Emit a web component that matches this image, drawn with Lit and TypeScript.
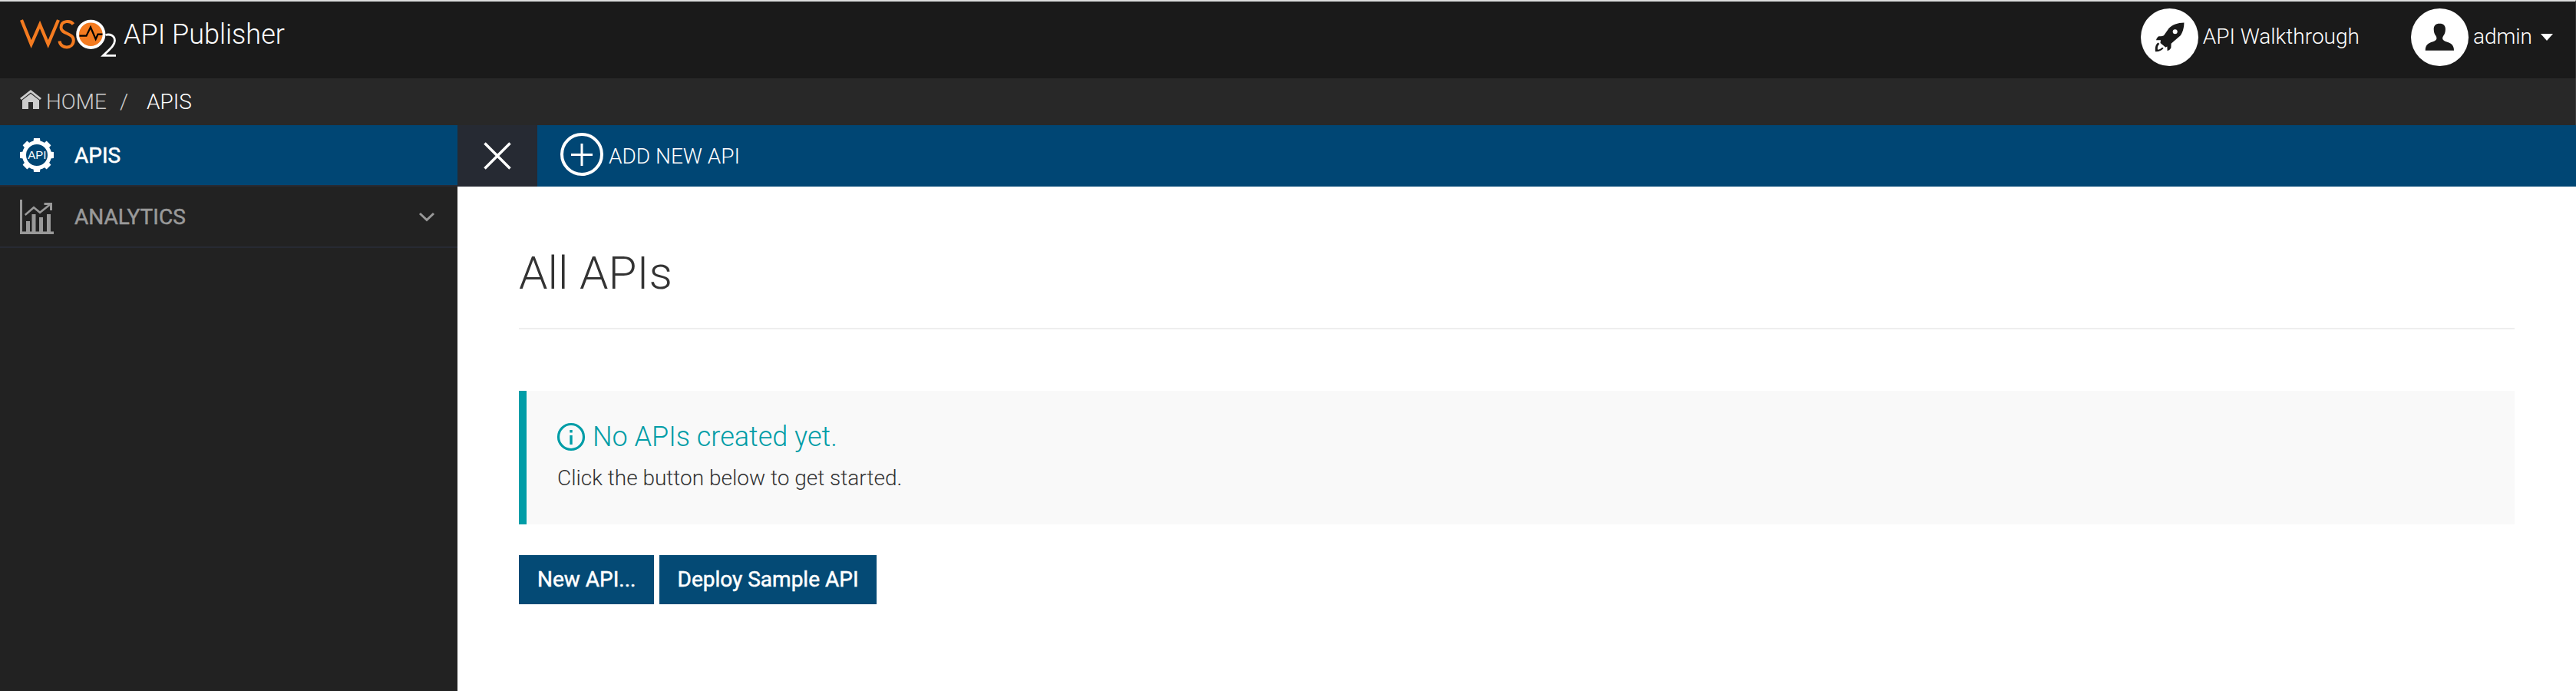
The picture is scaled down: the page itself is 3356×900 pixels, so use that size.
import { LitElement, html, css } from "lit";
import { customElement } from "lit/decorators.js";

@customElement("app-root")
export class AppRoot extends LitElement {
  static styles = css`
    :host { display: block; font-family: Roboto, "Liberation Sans", sans-serif; font-weight: 300; font-size: 28px; line-height: 40px; color: #333; background: #fff; }
    * { box-sizing: border-box; }
    svg { display: block; flex: none; overflow: visible; }
    .page { height: 900px; display: flex; flex-direction: column; overflow: hidden; }
    .topbar { flex: none; height: 102px; border-top: 2px solid #dcdddd; border-right: 1px solid #333; background: #1a1a1a; color: #fff; display: flex; justify-content: space-between; padding-right: 29px; }
    .brand { display: flex; padding-left: 26px; }
    .brand svg { margin-top: 23px; }
    .brand-name { font-size: 36px; line-height: 50px; margin: 18px 0 0 10px; white-space: nowrap; }
    .tools { display: flex; height: 75px; margin-top: 9px; align-items: center; }
    .tool { display: flex; align-items: center; gap: 6px; white-space: nowrap; }
    .tool + .tool { margin-left: 67px; }
    .tool svg + span { margin-top: -2px; }
    .caret { width: 0; height: 0; border: 8px solid transparent; border-top: 9px solid #fff; border-bottom: 0; margin-left: 5px; }
    .crumbs { flex: none; height: 61px; border-right: 1px solid #3c3c3c; background: #282828; color: #ccc; display: flex; align-items: center; padding-left: 26px; white-space: nowrap; }
    .crumbs svg { margin-bottom: 6px; }
    .crumbs .home { margin-left: 6px; }
    .crumbs .sep { margin-left: 17px; }
    .crumbs .here { margin-left: 24px; color: #fff; }
    .body { flex: 1; display: flex; min-height: 0; }
    .sidebar { flex: none; width: 596px; background: #222; }
    .item { height: 80px; border-bottom: 2px solid #272a33; display: flex; align-items: center; padding: 0 30px 0 26px; color: #999; font-weight: 400; -webkit-text-stroke: 0.5px currentColor; }
    .item.active { background: #004674; color: #fff; }
    .item .label { margin-left: 27px; padding-top: 1px; flex: 1; }
    .main { flex: 1; display: flex; flex-direction: column; }
    .actions { height: 80px; background: #004674; color: #fff; display: flex; }
    .close { width: 104px; background: #262a33; display: flex; justify-content: center; align-items: center; }
    .add { display: flex; align-items: center; margin-left: 30px; gap: 7px; }
    .add svg { margin-bottom: 4px; }
    .add span { padding-top: 1px; }
    .content { padding: 80px 80px 0; display: flex; flex-direction: column; }
    h1 { margin: 0; font-size: 60px; line-height: 66px; font-weight: 300; padding-bottom: 38px; border-bottom: 2px solid #eee; }
    .notice { margin-top: 80px; height: 174px; border-left: 10px solid #009da7; background: #f9f9f9; padding: 38px 40px 0; }
    .notice h2 { margin: 0; font-size: 36px; line-height: 44px; font-weight: 300; color: #009da7; display: flex; align-items: center; gap: 10px; }
    .notice p { margin: 12px 0 0; }
    .buttons { display: flex; gap: 7px; margin-top: 40px; }
    button { font: inherit; font-weight: 400; -webkit-text-stroke: 0.5px currentColor; color: #fff; background: #044a75; border: 0; height: 64px; padding: 0 23px 0 24px; }
    .gear-text { font-family: "Liberation Sans", sans-serif; font-size: 15px; font-weight: 400; }
  `;

  render() {
    return html`
      <div class="page">
        <header class="topbar">
          <div class="brand">
            <svg width="125" height="50" viewBox="0 0 125 50" fill="none">
              <path d="M2 1 14.700 32.500 26 7 36.700 32.500 50 1" stroke="#f47b20" stroke-width="4.200" />
              <path d="M69.500 6.500C66 1.500 53.500 1 53.500 11C53.500 19.500 69.800 17.500 69.800 27.500C69.800 39 53 39.500 51.500 28.500" stroke="#f47b20" stroke-width="4" />
              <circle cx="92.300" cy="19.800" r="17.200" fill="#f47b20" stroke="#fff" stroke-width="3.800" />
              <path d="M77.500 21.700H86.500L92 10.500 98.700 26 101.500 19.700H107.500" stroke="#000" stroke-width="2.200" />
              <path d="M111.500 20.500C117 19 123.500 21 123.500 28C123.500 34 117 39 108.500 47.300H125" stroke="#fff" stroke-width="2.800" />
            </svg>
            <span class="brand-name">API Publisher</span>
          </div>
          <div class="tools">
            <div class="tool">
              <svg width="75" height="75" viewBox="0 0 75 75"><circle cx="37.500" cy="37.500" r="37.500" fill="#fff" />
                <path fill="#1a1a1a" d="M56.400 18.500C48 18.500 41 21.500 36.700 25.800L30 35.200C27 36.500 25 36 23.400 36.200C21.500 37.500 20.500 39 20 41.200L26 41.200 25.500 45 32.400 50.800 34.400 49.500 34.600 55.200C37 54.500 38.500 53 39.400 51.200L39.600 45.800 51.700 35.200C55 31 56.500 24 56.400 18.500Z" />
                <path fill="#1a1a1a" d="M22.500 44.500C19 47 18.500 51.500 19 56.200C23.500 56.500 27 55 29.700 51.800L28 50.800C26 52.800 24 53.800 22 53.800C21.500 51 22 48.500 24.300 46Z" />
                <circle cx="44.700" cy="30.200" r="3" fill="#fff" /></svg>
              <span>API Walkthrough</span>
            </div>
            <div class="tool">
              <svg width="75" height="75" viewBox="0 0 75 75"><circle cx="37.500" cy="37.500" r="37.500" fill="#fff" />
                <path fill="#1a1a1a" d="M37.300 19.800C32 19.800 29.700 22.500 29.700 27C29.700 31 30.800 33.500 32.300 35.500C33.500 37.500 33.800 39 33 40.500C31.500 43 26.500 43.500 22.800 45.800C19.500 48 18.700 51 18.700 54.800H56C56 51 55 48 51.800 45.800C48 43.500 43 43 41.600 40.500C40.800 39 41 37.500 42.300 35.500C43.800 33.500 44.900 31 44.900 27C44.900 22.500 42.600 19.800 37.300 19.800Z" /></svg>
              <span>admin</span><i class="caret"></i>
            </div>
          </div>
        </header>
        <nav class="crumbs">
          <svg width="28" height="25" viewBox="0 0 28 25" fill="#ccc"><path d="M14 0 28 11 26 13 14 3.500 2 13 0 11ZM14 5 25 13.500V25H17V16H11V25H3V13.500Z" /></svg>
          <span class="home">HOME</span><span class="sep">/</span><span class="here">APIS</span>
        </nav>
        <div class="body">
          <aside class="sidebar">
            <div class="item active">
              <svg width="44" height="44" viewBox="0 0 44 44">
                <circle cx="22" cy="22" r="16.500" fill="none" stroke="#fff" stroke-width="5" />
                <g fill="#fff">${[0, 45, 90, 135, 180, 225, 270, 315].map((a) => this.tooth(a))}</g>
                <text class="gear-text" x="22.300" y="27.300" text-anchor="middle" fill="#fff">API</text>
              </svg>
              <span class="label">APIS</span>
            </div>
            <div class="item">
              <svg width="44" height="45" viewBox="0 0 44 45" fill="#999">
                <path d="M0 0H3V41.500H44V45H0ZM8 28H13V42H8ZM15.500 19H20.500V42H15.500ZM25 23H30V42H25ZM35 19H40V42H35Z" />
                <path d="M6.700 20 18 10.200 26 16.800 39 6.500" fill="none" stroke="#999" stroke-width="2.500" /><path d="M31.500 4H42V14H39V7H31.500Z" />
              </svg>
              <span class="label">ANALYTICS</span>
              <svg width="20" height="11" viewBox="0 0 20 11" fill="none" stroke="#999" stroke-width="3"><path d="M1 1 10 9.500 19 1" /></svg>
            </div>
          </aside>
          <main class="main">
            <div class="actions">
              <div class="close"><svg width="36" height="36" viewBox="0 0 36 36" stroke="#fff" stroke-width="3.500"><path d="M1.500 1.500 34.500 34.500M34.500 1.500 1.500 34.500" /></svg></div>
              <div class="add">
                <svg width="56" height="56" viewBox="0 0 56 56" fill="none" stroke="#fff" stroke-width="4"><circle cx="28" cy="28" r="26" /><path d="M14 28.500H42M28 14V43" stroke-width="3" /></svg>
                <span>ADD NEW API</span>
              </div>
            </div>
            <section class="content">
              <h1>All APIs</h1>
              <div class="notice">
                <h2><svg width="36" height="36" viewBox="0 0 36 36"><circle cx="18" cy="18" r="16.500" fill="none" stroke="#009da7" stroke-width="3.200" /><path fill="#009da7" d="M16.300 9H19.700V12.500H16.300ZM16.300 16H19.700V28H16.300Z" /></svg><span>No APIs created yet.</span></h2>
                <p>Click the button below to get started.</p>
              </div>
              <div class="buttons"><button>New API...</button><button>Deploy Sample API</button></div>
            </section>
          </main>
        </div>
      </div>
    `;
  }

  private tooth(angle: number) {
    return html`<svg><path transform="rotate(${angle} 22 22)" d="M17.500 5 18 0H26L26.500 5Z" /></svg>`;
  }
}
